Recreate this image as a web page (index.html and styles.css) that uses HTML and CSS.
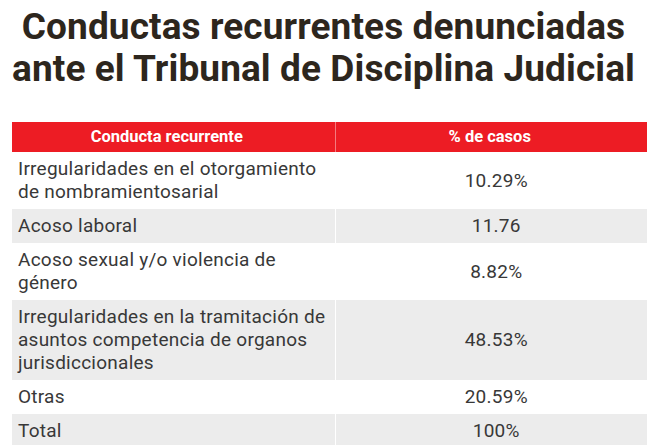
FILE: index.html
```html
<!DOCTYPE html>
<html lang="es">
<head>
<meta charset="utf-8">
<title>Conductas recurrentes</title>
<link rel="stylesheet" href="styles.css">
</head>
<body>
<div class="page">
  <h1 class="title">Conductas recurrentes denunciadas<br>ante el Tribunal de Disciplina Judicial</h1>
  <table class="data">
    <thead>
      <tr><th class="col-a">Conducta recurrente</th><th class="col-b">% de casos</th></tr>
    </thead>
    <tbody>
      <tr><td>Irregularidades en el otorgamiento de nombramientosarial</td><td class="num">10.29%</td></tr>
      <tr><td>Acoso laboral</td><td class="num">11.76</td></tr>
      <tr><td>Acoso sexual y/o violencia de género</td><td class="num">8.82%</td></tr>
      <tr><td>Irregularidades en la tramitación de asuntos competencia de organos jurisdiccionales</td><td class="num">48.53%</td></tr>
      <tr><td>Otras</td><td class="num">20.59%</td></tr>
      <tr><td>Total</td><td class="num">100%</td></tr>
    </tbody>
  </table>
</div>
</body>
</html>
```
FILE: styles.css
```css
html, body {
  margin: 0;
  padding: 0;
  background: #ffffff;
  overflow: hidden;
}
.page {
  width: 647px;
  font-family: Roboto, "Liberation Sans", sans-serif;
}
.title {
  margin: 6px 0 0 0;
  font-size: 37px;
  line-height: 42px;
  font-weight: 700;
  letter-spacing: 0.1px;
  color: #2d261d;
  text-align: center;
}
.data {
  margin: 32px 0 0 12px;
  width: 645px;
  border-collapse: collapse;
  table-layout: fixed;
}
.data th {
  box-sizing: border-box;
  background: #ed1c24;
  color: #ffffff;
  font-size: 16.5px;
  font-weight: 700;
  height: 30px;
  padding: 0 13px 0 0;
  line-height: 30px;
  text-align: center;
  border-right: 1px solid #f47a7e;
}
.data th.col-a { width: 323px; }
.data th:last-child { border-right: none; }
.data td {
  font-size: 19px;
  line-height: 23px;
  letter-spacing: 0.25px;
  color: #383838;
  padding: 5px 6px 6px 6px;
  vertical-align: middle;
  border-right: 1px solid #ffffff;
}
.data td:last-child { border-right: none; }
.data td.num { text-align: center; }
.data tbody tr:nth-child(even) td { background: #ececec; }
```
